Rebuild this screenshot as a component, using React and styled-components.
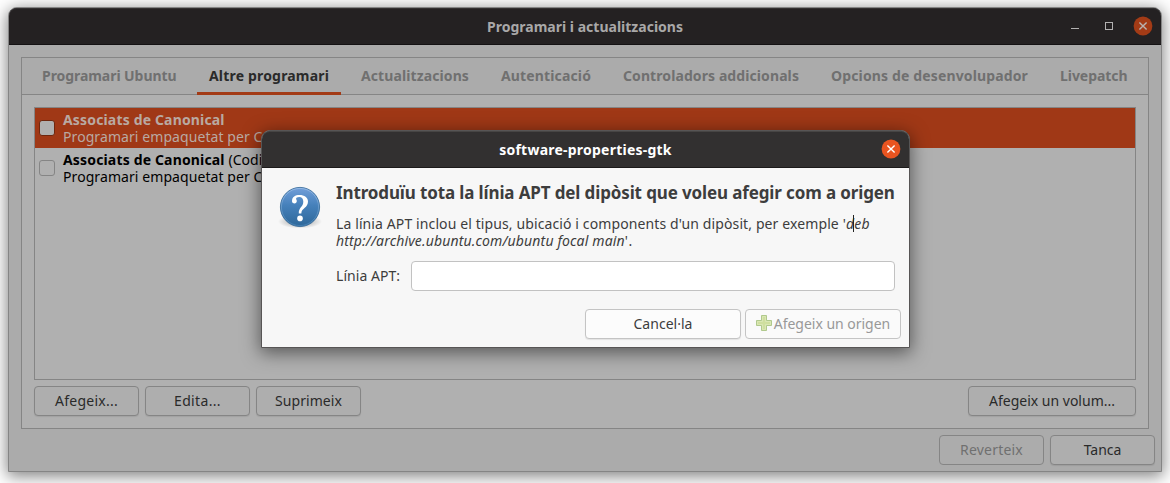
import React from "react";
import styled, { createGlobalStyle, css } from "styled-components";

const Global = createGlobalStyle`
  *, *::before, *::after { box-sizing: border-box; }
  html, body { margin: 0; background: #fff; overflow: hidden; }
  body {
    font: 14px/17px "Noto Sans", "Open Sans", sans-serif;
    color: #3d3d3d;
  }
  button, input { font: inherit; color: inherit; margin: 0; padding: 0; }
  svg { flex: none; }
`;

const Desktop = styled.main`
  position: relative;
  width: 1170px;
  height: 483px;
  padding: 7px 8px 11px;
  overflow: hidden;
`;

/* Keeps each label at the width it has in the desktop's own font. */
const Label = styled.span`
  letter-spacing: ${(p) => p.$track || 0}px;
  white-space: nowrap;
`;

const Window = styled.section`
  display: flex;
  flex-direction: column;
  width: 1154px;
  height: 465px;
  border: 1px solid #858585;
  border-radius: 9px 9px 0 0;
  background: #ababab;
  box-shadow: 0 3px 16px 1px rgba(0, 0, 0, 0.5);
`;

const HeaderBar = styled.header`
  position: relative;
  display: flex;
  align-items: center;
  justify-content: center;
  flex: none;
  height: 37px;
  padding-top: 1px;
  border-radius: 8px 8px 0 0;
  background: ${(p) => (p.$active ? "#323030" : "#242122")};
  border-bottom: 1px solid ${(p) => (p.$active ? "#1c1a1a" : "#141213")};
  box-shadow: inset 0 1px ${(p) => (p.$active ? "#474544" : "#333031")};
  color: ${(p) => (p.$active ? "#fff" : "#a9a8a8")};
  font-weight: 700;
`;

const WindowControls = styled.div`
  position: absolute;
  top: 8px;
  right: 8px;
  display: flex;
`;

const Body = styled.div`
  display: flex;
  flex-direction: column;
  flex: 1;
  padding: 12px 6px 6px 12px;
`;

const Notebook = styled.div`
  display: flex;
  flex-direction: column;
  width: 1128px;
  height: 372px;
  border: 1px solid #858585;
  background: #b0b0b0;
`;

const TabBar = styled.nav`
  display: flex;
  gap: 8px;
  height: 37px;
  padding-left: 8px;
  background: #ababab;
  box-shadow: inset 0 -1px #858585;
`;

const Tab = styled.div`
  width: ${(p) => p.$width}px;
  height: 37px;
  padding: 9px 0 0 12px;
  font-weight: 700;
  color: #707070;
  ${(p) => p.$selected && css`
    color: #2a2a2a;
    border-bottom: 3px solid #a33b16;
  `}
`;

const Page = styled.div`
  display: flex;
  flex-direction: column;
  gap: 6px;
  padding: 12px;
`;

const SourceList = styled.div`
  height: 273px;
  border: 1px solid #858585;
  background: #b0b0b0;
  overflow: hidden;
`;

const SourceRow = styled.div`
  display: flex;
  gap: 8px;
  height: 40px;
  padding: 3px 4px;
  background: ${(p) => (p.$selected ? "#a03816" : "transparent")};
  color: ${(p) => (p.$selected ? "#b9a9a2" : "#000")};
`;

const Check = styled.span`
  width: 16px;
  height: 16px;
  margin-top: 9px;
  border: 1px solid ${(p) => (p.$selected ? "#6f270f" : "#858585")};
  border-radius: 3px;
  background: #b0b0b0;
`;

const SourceText = styled.div`
  display: flex;
  flex-direction: column;
`;

const Strong = styled(Label)`
  font-weight: 700;
`;

const ButtonRow = styled.div`
  display: flex;
  gap: 6px;
  justify-content: ${(p) => (p.$end ? "flex-end" : "flex-start")};
  ${(p) => p.$top && `margin-top: ${p.$top}px;`}
`;

const Spacer = styled.div`
  flex: 1;
`;

const Button = styled.button`
  display: flex;
  align-items: center;
  justify-content: center;
  width: ${(p) => p.$width || 105}px;
  height: 30px;
  padding-bottom: 2px;
  border: 1px solid #858585;
  border-radius: 4px;
  background: #aeaeae;
  color: #2a2a2a;
  box-shadow: 0 1px 1px rgba(0, 0, 0, 0.08);
  &:disabled { background: #acacac; color: #707070; box-shadow: none; }
`;

const Dialog = styled.section`
  position: absolute;
  top: 130px;
  left: 261px;
  width: 649px;
  height: 218px;
  border: 1px solid #575555;
  border-radius: 9px 9px 0 0;
  background: #f7f7f7;
  box-shadow: 0 4px 18px 1px rgba(0, 0, 0, 0.5);
`;

const DialogContent = styled.div`
  display: flex;
  gap: 14px;
  padding: 15px 14px 0 16px;
`;

const DialogText = styled.div`
  flex: 1;
  min-width: 0;
`;

const Heading = styled.h1`
  margin: 0;
  font-size: 17px;
  line-height: 20px;
  font-weight: 700;
`;

const Description = styled.p`
  margin: 12px 0 0;
`;

const Italic = styled(Label)`
  font-style: italic;
`;

const Field = styled.label`
  display: flex;
  align-items: center;
  justify-content: space-between;
  margin-top: 12px;
`;

const FieldName = styled(Label)`
  padding-bottom: 2px;
`;

const Entry = styled.input`
  width: 484px;
  height: 30px;
  border: 1px solid #c2c2c2;
  border-radius: 4px;
  background: #fff;
`;

const DialogActions = styled.div`
  display: flex;
  justify-content: flex-end;
  gap: 4px;
  padding: 18px 8px 0;
`;

const DialogButton = styled(Button)`
  width: 156px;
  border-color: #c4c4c4;
  background: #fcfcfc;
  color: #3d3d3d;
  &:disabled { background: #fafafa; color: #989898; }
`;

const TextCursor = styled.i`
  position: absolute;
  top: 84px;
  left: 591px;
  width: 1px;
  height: 17px;
  background: #222;
`;

const CloseIcon = ({ fill, stroke }) => (
  <svg width="20" height="20" viewBox="0 0 20 20">
    <circle cx="10" cy="10" r="9.4" fill={fill} />
    <path d="M6.4 6.4 13.6 13.6M13.6 6.4 6.4 13.6" stroke={stroke} strokeWidth="1.4" />
  </svg>
);

const MinMaxIcons = () => (
  <svg width="66" height="20" viewBox="0 0 66 20">
    <path d="M4 12.5h8" stroke="#b2b1b1" />
    <rect x="38.5" y="6.5" width="7" height="7" fill="none" stroke="#b2b1b1" />
  </svg>
);

const QuestionIcon = () => (
  <svg width="44" height="48" viewBox="0 0 44 48">
    <defs>
      <linearGradient id="ball" x1="0" y1="0" x2="0" y2="1">
        <stop offset="0" stopColor="#729fda" />
        <stop offset="0.45" stopColor="#4681bb" />
        <stop offset="1" stopColor="#2d6799" />
      </linearGradient>
      <linearGradient id="rim" x1="0" y1="0" x2="0" y2="1">
        <stop offset="0" stopColor="#a6c6ea" />
        <stop offset="1" stopColor="#4d8abd" />
      </linearGradient>
      <radialGradient id="floor">
        <stop offset="0.5" stopColor="#000" stopOpacity="0.2" />
        <stop offset="1" stopColor="#000" stopOpacity="0" />
      </radialGradient>
    </defs>
    <ellipse cx="22" cy="38.5" rx="22" ry="7" fill="url(#floor)" />
    <circle cx="22" cy="24" r="19.6" fill="url(#ball)" stroke="#2f6596" strokeWidth="0.8" />
    <circle cx="22" cy="24" r="18.6" fill="none" stroke="url(#rim)" strokeWidth="0.8" opacity="0.8" />
    <path
      d="M14 18.2C14 13.8 17.3 12 21.5 12C26.4 12 30 14.4 30 18.6C30 25 23.6 25 23.3 30.5H20.8C20.4 24.4 25.3 24 25.3 18.7C25.3 15.7 23.9 14 21.2 14C19.3 14 18.1 14.7 18.1 15.8C18.1 16.6 18.8 17 18.8 18.1C18.8 19.5 17.8 20.4 16.5 20.4C15 20.4 14 19.5 14 18.2Z"
      fill="#fff"
    />
    <circle cx="22" cy="35.4" r="2.8" fill="#fff" />
  </svg>
);

const AddIcon = () => (
  <svg width="16" height="16" viewBox="0 0 16 16">
    <path
      d="M5.5 .5h5v5h5v5h-5v5h-5v-5h-5v-5h5z"
      fill="#cfdf9f"
      stroke="#b0c98d"
    />
    <path d="M6.5 1.5h3v5h5v3h-5v5h-3v-5h-5v-3h5z" fill="none" stroke="#dae7b4" />
  </svg>
);

const AddIconSlot = styled.span`
  display: flex;
  margin-right: 2px;
`;

const tabs = [
  { name: "Programari Ubuntu", width: 159, track: -0.06 },
  { name: "Altre programari", width: 144, track: 0.18, selected: true },
  { name: "Actualitzacions", width: 132, track: 0.1 },
  { name: "Autenticació", width: 114, track: 0.14 },
  { name: "Controladors addicionals", width: 200, track: 0.09 },
  { name: "Opcions de desenvolupador", width: 221, track: 0.14 },
  { name: "Livepatch", width: 91, track: -0.05 },
];

const sources = [
  { selected: true, suffix: "" },
  { selected: false, suffix: " (Codi font)" },
];

export default function App() {
  return (
    <Desktop>
      <Global />
      <Window>
        <HeaderBar>
          <Label $track={0.01}>Programari i actualitzacions</Label>
          <WindowControls>
            <MinMaxIcons />
            <CloseIcon fill="#a33b16" stroke="#b8b3b1" />
          </WindowControls>
        </HeaderBar>
        <Body>
          <Notebook>
            <TabBar>
              {tabs.map((t) => (
                <Tab key={t.name} $width={t.width} $selected={t.selected}>
                  <Label $track={t.track}>{t.name}</Label>
                </Tab>
              ))}
            </TabBar>
            <Page>
              <SourceList>
                {sources.map((s) => (
                  <SourceRow key={s.suffix} $selected={s.selected}>
                    <Check $selected={s.selected} />
                    <SourceText>
                      <div>
                        <Strong $track={0.16}>Associats de Canonical</Strong>
                        <Label $track={0.05}>{s.suffix}</Label>
                      </div>
                      <Label $track={0.08}>
                        Programari empaquetat per Canonical per als seus socis
                      </Label>
                    </SourceText>
                  </SourceRow>
                ))}
              </SourceList>
              <ButtonRow>
                <Button><Label $track={0.25}>Afegeix...</Label></Button>
                <Button><Label $track={0.35}>Edita...</Label></Button>
                <Button><Label $track={0.07}>Suprimeix</Label></Button>
                <Spacer />
                <Button $width={168}><Label>Afegeix un volum...</Label></Button>
              </ButtonRow>
            </Page>
          </Notebook>
          <ButtonRow $end $top={6}>
            <Button disabled><Label $track={0.21}>Reverteix</Label></Button>
            <Button><Label $track={-0.05}>Tanca</Label></Button>
          </ButtonRow>
        </Body>
      </Window>

      <Dialog>
        <HeaderBar $active>
          <Label $track={0.23}>software-properties-gtk</Label>
          <WindowControls>
            <CloseIcon fill="#e95420" stroke="#fff" />
          </WindowControls>
        </HeaderBar>
        <DialogContent>
          <QuestionIcon />
          <DialogText>
            <Heading>
              <Label $track={-0.13}>
                Introduïu tota la línia APT del dipòsit que voleu afegir com a origen
              </Label>
            </Heading>
            <Description>
              <Label $track={0.11}>
                La línia APT inclou el tipus, ubicació i components d'un dipòsit, per exemple '
              </Label>
              <Italic $track={0.3}>deb</Italic>
              <br />
              <Italic $track={0.15}>http://archive.ubuntu.com/ubuntu focal main</Italic>
              <Label $track={0.6}>'.</Label>
            </Description>
            <Field>
              <FieldName $track={0.05}>Línia APT:</FieldName>
              <Entry />
            </Field>
          </DialogText>
        </DialogContent>
        <DialogActions>
          <DialogButton><Label $track={0.02}>Cancel·la</Label></DialogButton>
          <DialogButton disabled>
            <AddIconSlot><AddIcon /></AddIconSlot>
            <Label $track={-0.02}>Afegeix un origen</Label>
          </DialogButton>
        </DialogActions>
        <TextCursor />
      </Dialog>
    </Desktop>
  );
}
